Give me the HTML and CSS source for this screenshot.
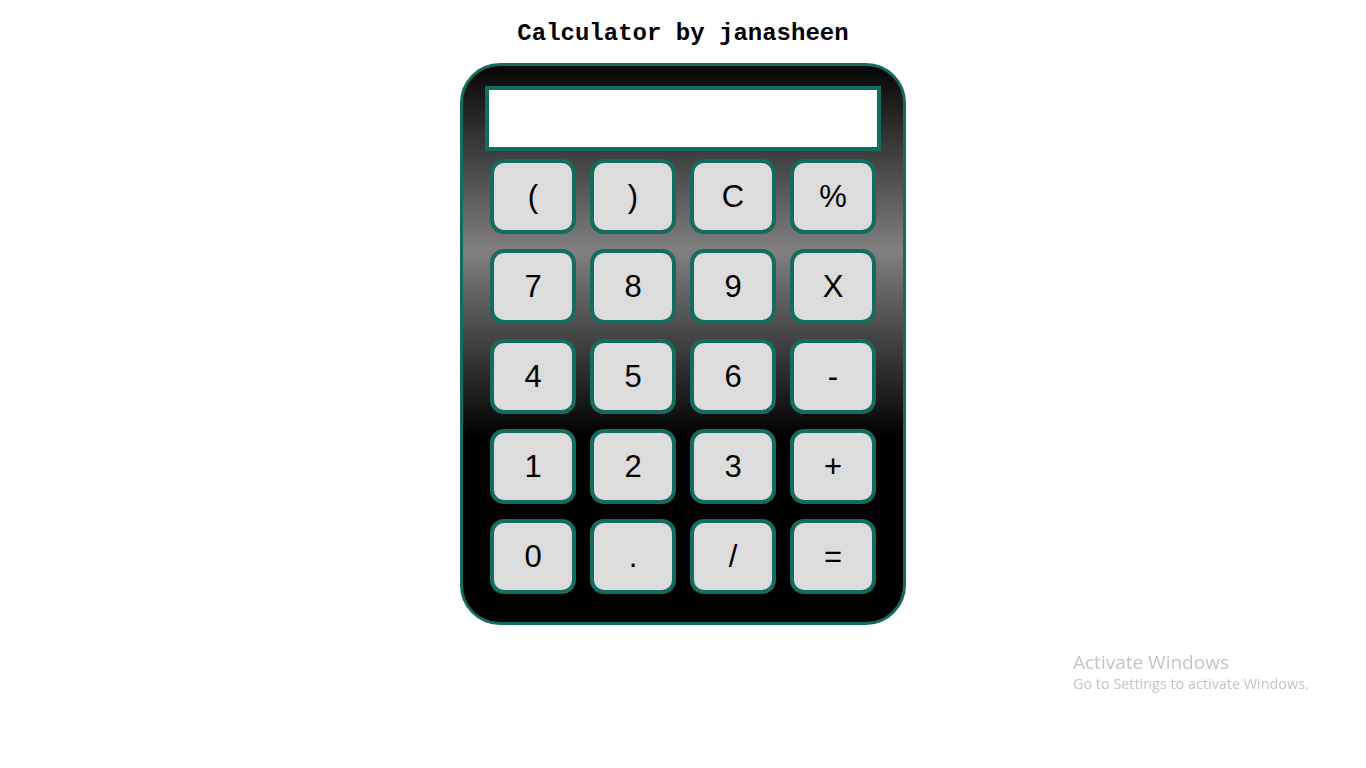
FILE: index.html
```html
<!DOCTYPE html>
<html>
<head>
<meta charset="utf-8">
<title>Calculator</title>
<link rel="stylesheet" href="styles.css">
</head>
<body>
<h2 class="title">Calculator by janasheen</h2>
<div class="calc">
  <div class="display"></div>
  <div class="keys">
    <button class="key">(</button>
    <button class="key">)</button>
    <button class="key">C</button>
    <button class="key">%</button>
    <button class="key">7</button>
    <button class="key">8</button>
    <button class="key">9</button>
    <button class="key">X</button>
    <button class="key">4</button>
    <button class="key">5</button>
    <button class="key">6</button>
    <button class="key">-</button>
    <button class="key">1</button>
    <button class="key">2</button>
    <button class="key">3</button>
    <button class="key">+</button>
    <button class="key">0</button>
    <button class="key">.</button>
    <button class="key">/</button>
    <button class="key">=</button>
  </div>
</div>
<div class="watermark">
  <div class="wm-title">Activate Windows</div>
  <div class="wm-sub">Go to Settings to activate Windows.</div>
</div>
</body>
</html>
```
FILE: styles.css
```css
html, body {
  margin: 0;
  padding: 0;
  background: #fff;
}
body {
  font-family: "Liberation Sans", Arial, sans-serif;
}
.title {
  margin: 20px 0 0;
  font-family: "Liberation Mono", "Courier New", monospace;
  font-weight: bold;
  font-size: 24px;
  line-height: 27px;
  text-align: center;
  color: #000;
}
.calc {
  box-sizing: border-box;
  width: 446px;
  margin: 16px auto 0;
  border: 3px solid #156b5e;
  border-radius: 40px;
  padding: 20px 0 28px;
  background: linear-gradient(#050505, #808080, #000, #000);
  display: flex;
  flex-direction: column;
  align-items: center;
}
.display {
  box-sizing: border-box;
  width: 396px;
  height: 65px;
  background: #fff;
  border: 4px solid #156b5e;
  margin-bottom: 8px;
}
.keys {
  display: grid;
  grid-template-columns: repeat(4, 86px);
  grid-auto-rows: 75px;
  column-gap: 14px;
  row-gap: 15px;
}
.key {
  box-sizing: border-box;
  margin: 0;
  padding: 0;
  background: #dcdcdc;
  border: 4px solid #156b5e;
  border-radius: 14px;
  font-family: "Liberation Sans", Arial, sans-serif;
  font-size: 31px;
  color: #000;
}
.watermark {
  position: fixed;
  left: 1073px;
  top: 650px;
  color: #c4c4c4;
  font-family: "Open Sans", "Noto Sans", sans-serif;
}
.wm-title {
  font-size: 19px;
  line-height: 24px;
}
.wm-sub {
  font-size: 14.4px;
  line-height: 20px;
}
```
